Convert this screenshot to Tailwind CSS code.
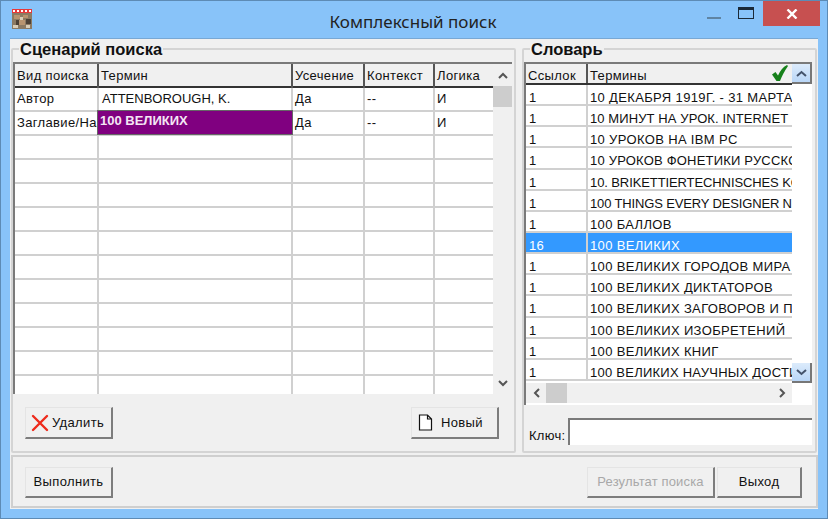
<!DOCTYPE html>
<html><head><meta charset="utf-8"><script src="https://cdn.jsdelivr.net/npm/@tailwindcss/browser@4"></script></head>
<body>
<div class="w-[828px] h-[519px] bg-[#88c3f9] border border-[#5d8bb5] flex flex-col overflow-hidden font-['Liberation_Sans',sans-serif] text-[13px] tracking-[0.35px] text-[#111]">
  <!-- title bar -->
  <div class="h-[37px] shrink-0 flex relative">
    <svg class="absolute left-[11px] top-[8px]" width="20" height="20" viewBox="0 0 20 20" shape-rendering="crispEdges"><rect width="20" height="20" fill="#fff"/><rect y="0" width="20" height="4" fill="#e8383a"/><path d="M1 1h2v2H1zM5 1h2v2H5zM9 1h2v2H9zM13 1h2v2h-2zM17 1h2v2h-2z" fill="#fff"/><rect y="4" width="20" height="16" fill="#8c7a63"/><path d="M2 6h6v4H2zM11 6h5v3h-5zM7 11h6v5H7z" fill="#b89470"/><path d="M4 11h3v5H4zM14 10h5v5h-5z" fill="#4d4136"/><path d="M8 8h3v3H8zM1 16h5v3H1zM14 16h4v3h-4z" fill="#d9cdb8"/></svg>
    <div class="flex-1 text-center pr-[2px] pt-[9px] font-['Noto_Sans',sans-serif] text-[17px] tracking-normal leading-[24px] text-[#222]">Комплексный поиск</div>
    <div class="absolute left-[706px] top-[16px] w-[14px] h-[2px] bg-[#5f84a3]"></div>
    <div class="absolute left-[737px] top-[6px] w-[16px] h-[12px] border border-[#1b2a38] border-t-[3px]"></div>
    <div class="absolute left-[762px] top-0 w-[57px] h-[25px] bg-[#c75050] flex items-center justify-center"><svg width="12" height="10" viewBox="0 0 12 10"><path d="M1.5 0.5L10.5 9.5M10.5 0.5L1.5 9.5" stroke="#fff" stroke-width="2.4"/></svg></div>
  </div>
  <!-- client -->
  <div class="ml-[9px] w-[808px] h-[471px] bg-[#f0f0f0] flex flex-col border-t border-[#79a8d4]">
    <div class="h-[414px] flex shrink-0">
      <!-- left group -->
      <div class="ml-[1px] mt-[9px] w-[505px] h-[405px] border-2 border-[#d4d4d4] relative flex flex-col rounded-[2px]">
        <div class="absolute left-[6px] top-[-9px] bg-[#f0f0f0] px-[1px] font-bold text-[16.5px] tracking-normal leading-[17px]">Сценарий поиска</div>
        <div class="mt-[12px] h-[332px] w-[499px] border-l-2 border-t-2 border-[#7a7a7a] flex overflow-hidden bg-white relative shrink-0">
          <div class="w-[478px] flex flex-col shrink-0">
            <div class="h-[24px] shrink-0 grid grid-cols-[84px_194px_72px_70px_58px] bg-[#f0f0f0] border-b-2 border-[#333] leading-[24px]">
              <div class="border-r-2 border-[#555] pl-[2px]">Вид поиска</div>
              <div class="border-r-2 border-[#555] pl-[2px]">Термин</div>
              <div class="border-r-2 border-[#555] pl-[2px]">Усечение</div>
              <div class="border-r-2 border-[#555] pl-[2px]">Контекст</div>
              <div class="pl-[2px]">Логика</div>
            </div>
            <div class="h-[24px] shrink-0 grid grid-cols-[84px_194px_72px_70px_58px] leading-[22px] border-b-2 border-[#d0d0d0]">
              <div class="border-r-2 border-[#d0d0d0] pl-[2px]">Автор</div><div class="border-r-2 border-[#d0d0d0] pl-[3px] tracking-normal">ATTENBOROUGH, K.</div><div class="border-r-2 border-[#d0d0d0] pl-[2px]">Да</div><div class="border-r-2 border-[#d0d0d0] pl-[2px]">--</div><div class="pl-[2px]">И</div>
            </div>
            <div class="h-[24px] shrink-0 grid grid-cols-[84px_194px_72px_70px_58px] leading-[22px] border-b-2 border-[#d0d0d0]">
              <div class="border-r-2 border-[#d0d0d0] pl-[2px] whitespace-nowrap overflow-hidden">Заглавие/Название</div>
              <div class="relative"><div class="absolute left-[-2px] top-[-2px] w-[196px] h-[25px] bg-[#800080] border border-[#666] font-bold tracking-normal text-[#f4e6f4] leading-[19px] pl-[2px]">100 ВЕЛИКИХ</div></div>
              <div class="border-r-2 border-[#d0d0d0] pl-[2px]">Да</div><div class="border-r-2 border-[#d0d0d0] pl-[2px]">--</div><div class="pl-[2px]">И</div>
            </div>
            <div class="h-[24px] shrink-0 grid grid-cols-[84px_194px_72px_70px_58px] border-b-2 border-[#d0d0d0]"><div class="border-r-2 border-[#d0d0d0]"></div><div class="border-r-2 border-[#d0d0d0]"></div><div class="border-r-2 border-[#d0d0d0]"></div><div class="border-r-2 border-[#d0d0d0]"></div><div></div></div>
            <div class="h-[24px] shrink-0 grid grid-cols-[84px_194px_72px_70px_58px] border-b-2 border-[#d0d0d0]"><div class="border-r-2 border-[#d0d0d0]"></div><div class="border-r-2 border-[#d0d0d0]"></div><div class="border-r-2 border-[#d0d0d0]"></div><div class="border-r-2 border-[#d0d0d0]"></div><div></div></div>
            <div class="h-[24px] shrink-0 grid grid-cols-[84px_194px_72px_70px_58px] border-b-2 border-[#d0d0d0]"><div class="border-r-2 border-[#d0d0d0]"></div><div class="border-r-2 border-[#d0d0d0]"></div><div class="border-r-2 border-[#d0d0d0]"></div><div class="border-r-2 border-[#d0d0d0]"></div><div></div></div>
            <div class="h-[24px] shrink-0 grid grid-cols-[84px_194px_72px_70px_58px] border-b-2 border-[#d0d0d0]"><div class="border-r-2 border-[#d0d0d0]"></div><div class="border-r-2 border-[#d0d0d0]"></div><div class="border-r-2 border-[#d0d0d0]"></div><div class="border-r-2 border-[#d0d0d0]"></div><div></div></div>
            <div class="h-[24px] shrink-0 grid grid-cols-[84px_194px_72px_70px_58px] border-b-2 border-[#d0d0d0]"><div class="border-r-2 border-[#d0d0d0]"></div><div class="border-r-2 border-[#d0d0d0]"></div><div class="border-r-2 border-[#d0d0d0]"></div><div class="border-r-2 border-[#d0d0d0]"></div><div></div></div>
            <div class="h-[24px] shrink-0 grid grid-cols-[84px_194px_72px_70px_58px] border-b-2 border-[#d0d0d0]"><div class="border-r-2 border-[#d0d0d0]"></div><div class="border-r-2 border-[#d0d0d0]"></div><div class="border-r-2 border-[#d0d0d0]"></div><div class="border-r-2 border-[#d0d0d0]"></div><div></div></div>
            <div class="h-[24px] shrink-0 grid grid-cols-[84px_194px_72px_70px_58px] border-b-2 border-[#d0d0d0]"><div class="border-r-2 border-[#d0d0d0]"></div><div class="border-r-2 border-[#d0d0d0]"></div><div class="border-r-2 border-[#d0d0d0]"></div><div class="border-r-2 border-[#d0d0d0]"></div><div></div></div>
            <div class="h-[24px] shrink-0 grid grid-cols-[84px_194px_72px_70px_58px] border-b-2 border-[#d0d0d0]"><div class="border-r-2 border-[#d0d0d0]"></div><div class="border-r-2 border-[#d0d0d0]"></div><div class="border-r-2 border-[#d0d0d0]"></div><div class="border-r-2 border-[#d0d0d0]"></div><div></div></div>
            <div class="h-[24px] shrink-0 grid grid-cols-[84px_194px_72px_70px_58px] border-b-2 border-[#d0d0d0]"><div class="border-r-2 border-[#d0d0d0]"></div><div class="border-r-2 border-[#d0d0d0]"></div><div class="border-r-2 border-[#d0d0d0]"></div><div class="border-r-2 border-[#d0d0d0]"></div><div></div></div>
            <div class="h-[24px] shrink-0 grid grid-cols-[84px_194px_72px_70px_58px] border-b-2 border-[#d0d0d0]"><div class="border-r-2 border-[#d0d0d0]"></div><div class="border-r-2 border-[#d0d0d0]"></div><div class="border-r-2 border-[#d0d0d0]"></div><div class="border-r-2 border-[#d0d0d0]"></div><div></div></div>
            <div class="h-[24px] shrink-0 grid grid-cols-[84px_194px_72px_70px_58px] border-b-2 border-[#d0d0d0]"><div class="border-r-2 border-[#d0d0d0]"></div><div class="border-r-2 border-[#d0d0d0]"></div><div class="border-r-2 border-[#d0d0d0]"></div><div class="border-r-2 border-[#d0d0d0]"></div><div></div></div>
          </div>
          <div class="w-[19px] bg-[#f0f0f0] flex flex-col items-center shrink-0">
            <div class="h-[22px] flex items-center justify-center shrink-0"><svg width="10" height="7" viewBox="0 0 10 7"><path d="M1 6L5 2L9 6" fill="none" stroke="#555" stroke-width="2"/></svg></div>
            <div class="h-[21px] w-[19px] bg-[#cdcdcd] shrink-0"></div>
            <div class="flex-1"></div>
            <div class="h-[22px] mb-[0px] flex items-center justify-center shrink-0"><svg width="10" height="7" viewBox="0 0 10 7"><path d="M1 1L5 5L9 1" fill="none" stroke="#555" stroke-width="2"/></svg></div>
          </div>
        </div>
        <div class="mt-[13px] pl-[12px] pr-[15px] flex justify-between">
          <div class="w-[88px] h-[32px] bg-[#f0f0f0] border-r-2 border-b-2 border-[#7d7d7d] border-l border-t border-l-[#e4e4e4] border-t-[#e4e4e4] flex items-center pl-[5px] gap-[3px]">
            <svg width="18" height="18" viewBox="0 0 18 18"><path d="M2 2L16 16M16 2L2 16" stroke="#ee2b1c" stroke-width="2.4" stroke-linecap="round"/></svg><span>Удалить</span>
          </div>
          <div class="w-[88px] h-[32px] bg-[#f0f0f0] border-r-2 border-b-2 border-[#7d7d7d] border-l border-t border-l-[#e4e4e4] border-t-[#e4e4e4] flex items-center pl-[6px] gap-[8px]">
            <svg width="15" height="17" viewBox="0 0 15 17"><path d="M1.5 1V16H13.5V5L9.5 1ZM9.5 1V5H13.5" fill="#fff" stroke="#111" stroke-width="1.2"/></svg><span>Новый</span>
          </div>
        </div>
      </div>
      <!-- right group -->
      <div class="ml-[6px] mt-[9px] w-[295px] h-[405px] border-2 border-[#d4d4d4] relative flex flex-col rounded-[2px]">
        <div class="absolute left-[6px] top-[-9px] bg-[#f0f0f0] px-[1px] font-bold text-[16.5px] tracking-normal leading-[17px]">Словарь</div>
        <div class="mt-[12px] h-[343px] w-[288px] border-l-2 border-t-2 border-[#7a7a7a] bg-white flex overflow-hidden shrink-0">
          <div class="w-[266px] shrink-0 flex flex-col">
            <div class="h-[21px] shrink-0 flex bg-[#f0f0f0] border-b-2 border-[#333] leading-[23px]">
              <div class="w-[62px] border-r-2 border-[#555] pl-[2px]">Ссылок</div>
              <div class="flex-1 pl-[2px] relative">Термины<svg class="absolute right-[3px] top-[0px]" width="18" height="18" viewBox="0 0 18 18"><path d="M1 10.5L4.5 8L7 11.5C9 7 12 3 16 1L17 2C13.5 7 11 12 9 17H5.5Z" fill="#16801a"/></svg></div>
            </div>
            <div class="h-[298px] shrink-0 overflow-hidden flex flex-col leading-[25px]">
              <div class="h-[21.15px] shrink-0 flex border-b-2 border-[#d0d0d0]"><div class="w-[62px] shrink-0 border-r-2 border-[#d0d0d0] pl-[3px]">1</div><div class="flex-1 pl-[2px] whitespace-nowrap overflow-hidden">10 ДЕКАБРЯ 1919Г. - 31 МАРТА 1920Г.</div></div>
              <div class="h-[21.15px] shrink-0 flex border-b-2 border-[#d0d0d0]"><div class="w-[62px] shrink-0 border-r-2 border-[#d0d0d0] pl-[3px]">1</div><div class="flex-1 pl-[2px] whitespace-nowrap overflow-hidden tracking-[0.1px]">10 МИНУТ НА УРОК. INTERNET И ЭЛЕКТРОННАЯ</div></div>
              <div class="h-[21.15px] shrink-0 flex border-b-2 border-[#d0d0d0]"><div class="w-[62px] shrink-0 border-r-2 border-[#d0d0d0] pl-[3px]">1</div><div class="flex-1 pl-[2px] whitespace-nowrap overflow-hidden">10 УРОКОВ НА IBM PC</div></div>
              <div class="h-[21.15px] shrink-0 flex border-b-2 border-[#d0d0d0]"><div class="w-[62px] shrink-0 border-r-2 border-[#d0d0d0] pl-[3px]">1</div><div class="flex-1 pl-[2px] whitespace-nowrap overflow-hidden tracking-[0.2px]">10 УРОКОВ ФОНЕТИКИ РУССКОГО ЯЗЫКА</div></div>
              <div class="h-[21.15px] shrink-0 flex border-b-2 border-[#d0d0d0]"><div class="w-[62px] shrink-0 border-r-2 border-[#d0d0d0] pl-[3px]">1</div><div class="flex-1 pl-[2px] whitespace-nowrap overflow-hidden tracking-[-0.1px]">10. BRIKETTIERTECHNISCHES KOLLOQUIUM</div></div>
              <div class="h-[21.15px] shrink-0 flex border-b-2 border-[#d0d0d0]"><div class="w-[62px] shrink-0 border-r-2 border-[#d0d0d0] pl-[3px]">1</div><div class="flex-1 pl-[2px] whitespace-nowrap overflow-hidden tracking-[-0.15px]">100 THINGS EVERY DESIGNER NEEDS TO KNOW</div></div>
              <div class="h-[21.15px] shrink-0 flex border-b-2 border-[#d0d0d0]"><div class="w-[62px] shrink-0 border-r-2 border-[#d0d0d0] pl-[3px]">1</div><div class="flex-1 pl-[2px] whitespace-nowrap overflow-hidden">100 БАЛЛОВ</div></div>
              <div class="h-[21.15px] shrink-0 flex bg-[#3399ff] text-white border-b-2 border-[#d0d0d0]"><div class="w-[62px] shrink-0 border-r-2 border-[#d0d0d0] pl-[3px]">16</div><div class="flex-1 pl-[2px] whitespace-nowrap overflow-hidden">100 ВЕЛИКИХ</div></div>
              <div class="h-[21.15px] shrink-0 flex border-b-2 border-[#d0d0d0]"><div class="w-[62px] shrink-0 border-r-2 border-[#d0d0d0] pl-[3px]">1</div><div class="flex-1 pl-[2px] whitespace-nowrap overflow-hidden">100 ВЕЛИКИХ ГОРОДОВ МИРА</div></div>
              <div class="h-[21.15px] shrink-0 flex border-b-2 border-[#d0d0d0]"><div class="w-[62px] shrink-0 border-r-2 border-[#d0d0d0] pl-[3px]">1</div><div class="flex-1 pl-[2px] whitespace-nowrap overflow-hidden">100 ВЕЛИКИХ ДИКТАТОРОВ</div></div>
              <div class="h-[21.15px] shrink-0 flex border-b-2 border-[#d0d0d0]"><div class="w-[62px] shrink-0 border-r-2 border-[#d0d0d0] pl-[3px]">1</div><div class="flex-1 pl-[2px] whitespace-nowrap overflow-hidden">100 ВЕЛИКИХ ЗАГОВОРОВ И ПУТЧЕЙ</div></div>
              <div class="h-[21.15px] shrink-0 flex border-b-2 border-[#d0d0d0]"><div class="w-[62px] shrink-0 border-r-2 border-[#d0d0d0] pl-[3px]">1</div><div class="flex-1 pl-[2px] whitespace-nowrap overflow-hidden">100 ВЕЛИКИХ ИЗОБРЕТЕНИЙ</div></div>
              <div class="h-[21.15px] shrink-0 flex border-b-2 border-[#d0d0d0]"><div class="w-[62px] shrink-0 border-r-2 border-[#d0d0d0] pl-[3px]">1</div><div class="flex-1 pl-[2px] whitespace-nowrap overflow-hidden">100 ВЕЛИКИХ КНИГ</div></div>
              <div class="h-[21.15px] shrink-0 flex border-b-2 border-[#d0d0d0]"><div class="w-[62px] shrink-0 border-r-2 border-[#d0d0d0] pl-[3px]">1</div><div class="flex-1 pl-[2px] whitespace-nowrap overflow-hidden tracking-[0.25px]">100 ВЕЛИКИХ НАУЧНЫХ ДОСТИЖЕНИЙ</div></div>
            </div>
            <div class="h-[20px] shrink-0 bg-[#f0f0f0] flex items-center relative">
              <div class="w-[20px] flex justify-center"><svg width="7" height="10" viewBox="0 0 7 10"><path d="M6 1L2 5L6 9" fill="none" stroke="#555" stroke-width="2"/></svg></div>
              <div class="w-[21px] h-full bg-[#cdcdcd]"></div>
              <div class="flex-1"></div>
              <div class="w-[20px] flex justify-center"><svg width="7" height="10" viewBox="0 0 7 10"><path d="M1 1L5 5L1 9" fill="none" stroke="#555" stroke-width="2"/></svg></div>
            </div>
          </div>
          <div class="w-[20px] shrink-0 flex flex-col h-[319px]">
            <div class="h-[20px] bg-gradient-to-b from-[#dcebfb] to-[#b9d6f7] border-r-2 border-b-2 border-[#777] flex items-center justify-center shrink-0"><svg width="11" height="7" viewBox="0 0 11 7"><path d="M1 6L5.5 2L10 6" fill="none" stroke="#44536b" stroke-width="2"/></svg></div>
            <div class="flex-1"></div>
            <div class="h-[20px] bg-gradient-to-b from-[#dcebfb] to-[#b9d6f7] border-r-2 border-b-2 border-[#777] flex items-center justify-center shrink-0"><svg width="11" height="7" viewBox="0 0 11 7"><path d="M1 1L5.5 5L10 1" fill="none" stroke="#44536b" stroke-width="2"/></svg></div>
          </div>
        </div>
        <div class="mt-[13px] flex items-center pl-[5px]">
          <span class="w-[39px] shrink-0 pt-[8px] tracking-[0.3px]">Ключ:</span>
          <div class="w-[244px] h-[27px] bg-white border-l-2 border-t-2 border-[#7a7a7a]"></div>
        </div>
      </div>
    </div>
    <!-- bottom panel -->
    <div class="ml-[1px] mt-[2px] w-[807px] h-[53px] border-2 border-[#cfcfcf] flex items-center justify-between pl-[12px] pr-[14px] pt-[2px]">
      <div class="w-[88px] h-[31px] bg-[#f0f0f0] border-r-2 border-b-2 border-[#7d7d7d] border-l border-t border-l-[#e4e4e4] border-t-[#e4e4e4] flex items-center justify-center">Выполнить</div>
      <div class="flex gap-[2px]">
        <div class="w-[128px] h-[31px] bg-[#f0f0f0] border-r-2 border-b-2 border-[#7d7d7d] border-l border-t border-l-[#e4e4e4] border-t-[#e4e4e4] flex items-center justify-center text-[#a8a8a8] tracking-[0.15px]">Результат поиска</div>
        <div class="w-[85px] h-[31px] bg-[#f0f0f0] border-r-2 border-b-2 border-[#7d7d7d] border-l border-t border-l-[#e4e4e4] border-t-[#e4e4e4] flex items-center justify-center">Выход</div>
      </div>
    </div>
  </div>
</div>
</body></html>
